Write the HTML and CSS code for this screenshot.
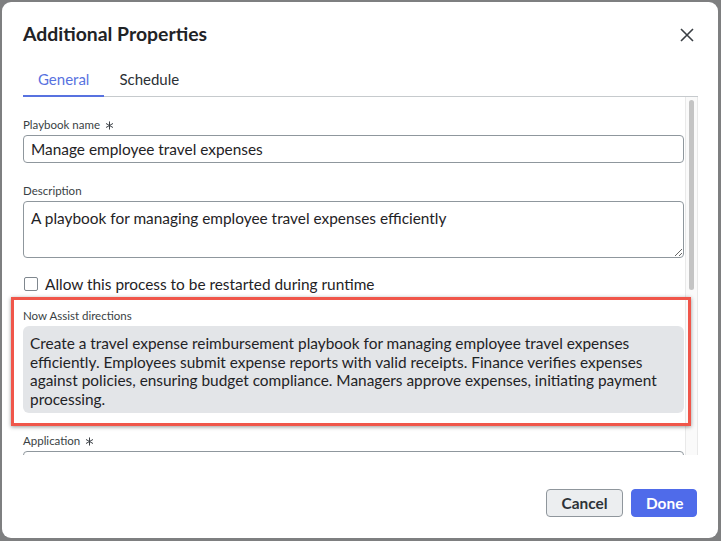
FILE: index.html
```html
<!DOCTYPE html>
<html lang="en">
  <head>
    <meta charset="UTF-8" />
    <meta name="viewport" content="width=device-width, initial-scale=1.0" />
    <title>Additional Properties</title>
    <link rel="stylesheet" href="styles.css">
  </head>
  <body>
    <div class="modal">
      <div class="modal-header">
        <h2>Additional Properties</h2>
        <button class="btn-close" aria-label="Close">
          <svg width="14" height="14" viewBox="0 0 14 14">
            <path d="M1 1 L13 13 M13 1 L1 13" stroke="#3a3f44" stroke-width="1.6" fill="none" />
          </svg>
        </button>
      </div>

      <div class="tabs">
        <div class="tab active">General</div>
        <div class="tab">Schedule</div>
      </div>

      <div class="body-wrap">
        <div class="modal-body">
          <div class="field">
            <label for="playbook-name">Playbook name
              <svg class="req" width="9" height="9" viewBox="0 0 10 10">
                <path d="M5 0.5 V9.5 M1.1 2.75 L8.9 7.25 M1.1 7.25 L8.9 2.75" stroke="#3a3f44" stroke-width="1.1" />
              </svg>
            </label>
            <input type="text" id="playbook-name" value="Manage employee travel expenses" />
          </div>

          <div class="field">
            <label for="description">Description</label>
            <textarea id="description" rows="2">A playbook for managing employee travel expenses efficiently</textarea>
          </div>

          <label class="check-row">
            <input type="checkbox" id="allow-restart" />
            Allow this process to be restarted during runtime
          </label>

          <div class="field">
            <label>Now Assist directions</label>
            <div class="directions">
              Create a travel expense reimbursement playbook for managing employee travel expenses
              efficiently. Employees submit expense reports with valid receipts. Finance verifies expenses
              against policies, ensuring budget compliance. Managers approve expenses, initiating payment
              processing.
            </div>
          </div>

          <div class="field">
            <label for="application">Application
              <svg class="req" width="9" height="9" viewBox="0 0 10 10">
                <path d="M5 0.5 V9.5 M1.1 2.75 L8.9 7.25 M1.1 7.25 L8.9 2.75" stroke="#3a3f44" stroke-width="1.1" />
              </svg>
            </label>
            <input type="text" id="application" />
          </div>
        </div>

        <!-- scrollbar for the form area -->
        <div class="scrollbar">
          <div class="thumb"></div>
        </div>
      </div>

      <!-- callout around the directions block -->
      <div class="callout"></div>

      <div class="modal-footer">
        <button class="btn btn-cancel">Cancel</button>
        <button class="btn btn-done">Done</button>
      </div>
    </div>
  </body>
</html>
```

FILE: styles.css
```css
html,
body {
  height: 100%;
}

body {
  font-family: "Lato", "Liberation Sans", sans-serif;
  margin: 0;
  padding: 2px 3px 3px 2px;
  box-sizing: border-box;
  background-color: #7e7f80;
  color: #1f2326;
}

/* Dialog */
.modal {
  position: relative;
  height: 100%;
  display: flex;
  flex-direction: column;
  background-color: #ffffff;
  border-radius: 9px;
  overflow: hidden;
}

.modal-header {
  display: flex;
  align-items: center;
  justify-content: space-between;
  padding: 20px 24px 0 21px;
}

h2 {
  margin: 0;
  font-size: 19.4px;
  line-height: 24px;
  font-weight: 700;
  color: #1f2326;
}

.btn-close {
  border: none;
  background: none;
  padding: 0;
  width: 14px;
  height: 14px;
  margin-top: 2px;
  cursor: pointer;
}

.btn-close svg {
  display: block;
}

/* Tabs */
.tabs {
  display: flex;
  margin: 18px 20px 0 21px;
  border-bottom: 1px solid #c6cacd;
}

.tab {
  padding: 5px 15px 6px;
  font-size: 15px;
  line-height: 20px;
  color: #2b3034;
  border-bottom: 2px solid transparent;
  margin-bottom: -1px;
}

.tab.active {
  color: #5872e0;
  border-bottom-color: #5872e0;
}

/* Scrolling form area */
.body-wrap {
  display: flex;
  height: 358px;
  margin-right: 20px;
}

.modal-body {
  flex: 1;
  overflow: hidden;
  padding: 20px 0 0 21px;
}

.scrollbar {
  width: 13px;
  margin-left: 1px;
  background-color: #fafafa;
  border-left: 1px solid #e9e9e9;
  border-right: 1px solid #e9e9e9;
  padding: 3px 3px 0;
  box-sizing: border-box;
}

.thumb {
  height: 190px;
  background-color: #c4c4c4;
  border-radius: 4px;
}

.field {
  margin-bottom: 20px;
}

.field label {
  display: block;
  font-size: 11.5px;
  line-height: 16px;
  color: #3a3f44;
  margin-bottom: 2px;
}

.req {
  margin-left: 2px;
  vertical-align: -1px;
}

input[type="text"],
textarea {
  display: block;
  width: 100%;
  box-sizing: border-box;
  border: 1px solid #8f979d;
  border-radius: 4px;
  font-family: inherit;
  font-size: 15.4px;
  color: #1f2326;
  background-color: #ffffff;
}

input[type="text"] {
  height: 28px;
  padding: 0 7px;
}

textarea {
  height: 57px;
  padding: 6px 7px;
  line-height: 20px;
  resize: vertical;
}

/* Checkbox row */
.check-row {
  display: flex;
  align-items: center;
  gap: 7px;
  font-size: 15.4px;
  line-height: 20px;
  color: #1f2326;
  margin: -4px 0 14px 0;
}

.check-row input[type="checkbox"] {
  appearance: none;
  margin: 0 0 0 1px;
  width: 14px;
  height: 14px;
  border: 1px solid #7f878e;
  border-radius: 2px;
  background-color: #ffffff;
}

.directions {
  background-color: #e3e5e8;
  border-radius: 6px;
  padding: 8px 8px 5px 7px;
  font-size: 15.4px;
  line-height: 18.5px;
  color: #1f2326;
}

/* Red outline drawn over the directions block */
.callout {
  position: absolute;
  left: 9px;
  top: 295px;
  width: 680px;
  height: 129px;
  box-sizing: border-box;
  border: 3px solid #f0564a;
  box-shadow: 0 1px 4px rgba(0, 0, 0, 0.4);
  pointer-events: none;
}

/* Footer buttons */
.modal-footer {
  display: flex;
  justify-content: flex-end;
  gap: 8px;
  padding: 34px 21px 21px;
}

.btn {
  height: 28px;
  padding: 0 14px;
  border-radius: 4px;
  font-family: inherit;
  font-size: 15.4px;
  font-weight: 700;
  cursor: pointer;
}

.btn-cancel {
  background-color: #eceef0;
  border: 1px solid #8f969c;
  color: #2e3338;
  width: 77px;
}

.btn-done {
  background-color: #4f6bea;
  border: 1px solid #4f6bea;
  color: #ffffff;
  width: 66px;
}
```
